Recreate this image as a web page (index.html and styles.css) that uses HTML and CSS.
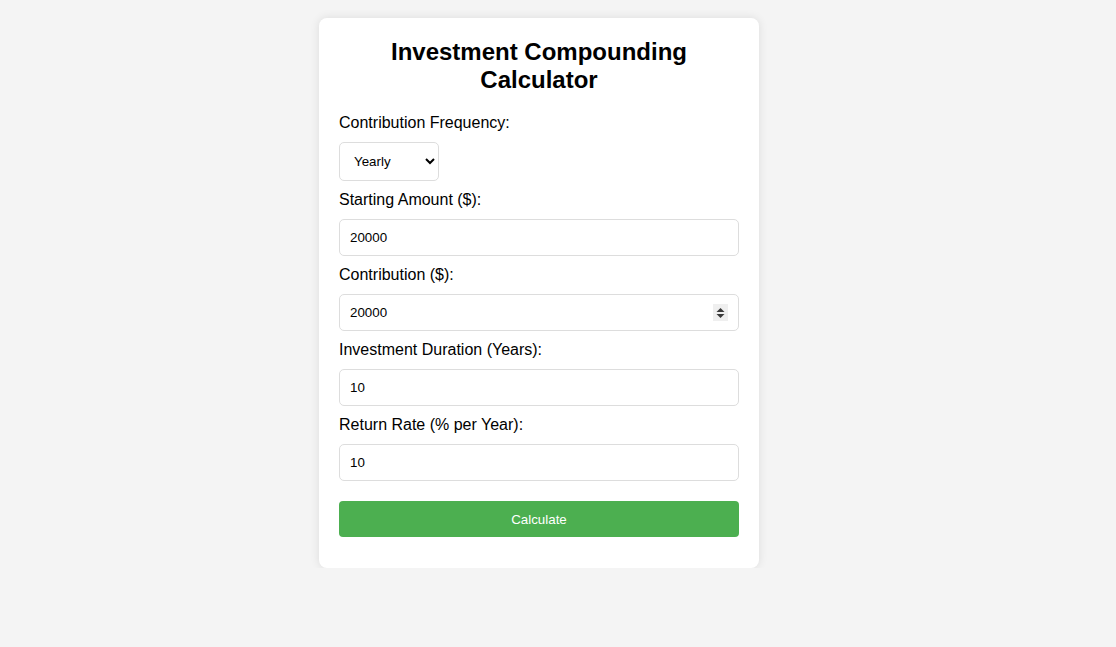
FILE: index.html
```html
<!DOCTYPE html>
<html>
<head>
<meta charset="utf-8">
<link rel="stylesheet" href="styles.css">
<title>Investment Compounding Calculator</title>
</head>
<body>
<div class="card">
  <h2 class="title">Investment Compounding Calculator</h2>
  <label class="label">Contribution Frequency:</label>
  <select class="select">
    <option>Yearly</option>
    <option>Monthly</option>
  </select>
  <label class="label">Starting Amount ($):</label>
  <input class="field" type="text" value="20000">
  <label class="label">Contribution ($):</label>
  <div class="field-wrap">
    <input class="field" type="text" value="20000">
    <span class="spin"><svg width="9" height="12" viewBox="0 0 9 12"><path d="M4.5 1 L8.5 5 L0.5 5 Z M4.5 11 L8.5 7 L0.5 7 Z" fill="#3a3a3a"/></svg></span>
  </div>
  <label class="label">Investment Duration (Years):</label>
  <input class="field" type="text" value="10">
  <label class="label">Return Rate (% per Year):</label>
  <input class="field" type="text" value="10">
  <button class="btn">Calculate</button>
</div>
</body>
</html>
```
FILE: styles.css
```css
html, body {
  margin: 0;
  padding: 0;
}
body {
  background: #f4f4f4;
  font-family: "Liberation Sans", Arial, sans-serif;
  padding: 18px 38px 0 0;
}
.card {
  width: 400px;
  margin: 0 auto;
  background: #fff;
  padding: 20px 20px 31px;
  border-radius: 8px;
  box-shadow: 0 0 10px rgba(0, 0, 0, 0.1);
}
.title {
  margin: 0 0 20px;
  text-align: center;
  font-size: 24px;
  line-height: 28px;
  font-weight: bold;
  color: #000;
}
.label {
  display: block;
  font-size: 16px;
  line-height: 18px;
  margin-bottom: 10px;
  color: #000;
}
.select {
  display: block;
  width: 100px;
  height: 39px;
  padding: 0 8px 0 10px;
  margin-bottom: 10px;
  border: 1px solid #ddd;
  border-radius: 5px;
  background: #fff;
  font-family: "Liberation Sans", Arial, sans-serif;
  font-size: 13.33px;
  color: #000;
}
.field-wrap {
  position: relative;
}
.field {
  display: block;
  box-sizing: border-box;
  width: 400px;
  height: 37px;
  padding: 10px;
  margin: 0 0 10px;
  border: 1px solid #ddd;
  border-radius: 5px;
  font-family: "Liberation Sans", Arial, sans-serif;
  font-size: 13.33px;
  color: #000;
  outline: none;
}
.spin {
  position: absolute;
  right: 11px;
  top: 10px;
  width: 15px;
  height: 17px;
  background: #efefef;
  display: flex;
  align-items: center;
  justify-content: center;
}
.btn {
  display: block;
  width: 400px;
  height: 36px;
  margin-top: 20px;
  border: none;
  border-radius: 4px;
  background: #4caf50;
  color: #fff;
  font-family: "Liberation Sans", Arial, sans-serif;
  font-size: 13.33px;
  cursor: pointer;
}
```
